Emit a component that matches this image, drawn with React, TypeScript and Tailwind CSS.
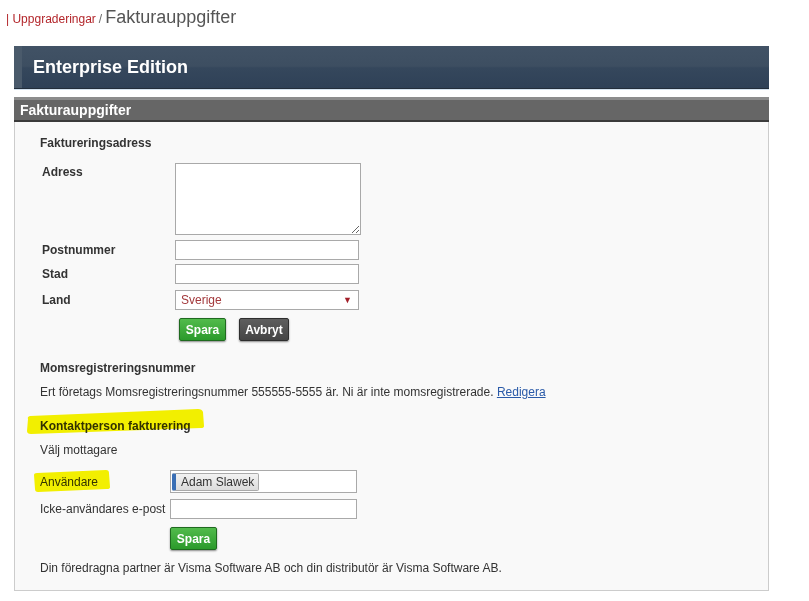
import React from "react";

const Label = ({ children, bold = true }: { children: React.ReactNode; bold?: boolean }) => (
  <div className={bold ? "font-bold pl-[2px]" : ""}>{children}</div>
);

const TextInput = ({ w = "w-[184px]" }: { w?: string }) => (
  <input
    readOnly
    className={`${w} h-[20px] border border-[#a9a9a9] bg-white px-1 text-[12px] outline-none`}
  />
);

const GreenButton = ({ children }: { children: React.ReactNode }) => (
  <button className="h-[23px] w-[47px] rounded-[2px] border border-[#1f6a1f] bg-[linear-gradient(to_bottom,#52bb4c,#2b9a2b)] text-[12px] font-bold text-white shadow-[0_1px_2px_rgba(0,0,0,0.45)]">
    {children}
  </button>
);

const App = () => {
  return (
    <div className="relative h-[601px] w-[809px] bg-white font-['Liberation_Sans',Arial,sans-serif] text-[12px] leading-[16px] text-[#333]">
      {/* breadcrumb */}
      <div className="flex h-[46px] items-baseline pl-[6px] pt-[6px]">
        <span className="text-[12px] text-[#b3262b]">| Uppgraderingar</span>
        <span className="ml-[3px] text-[12px] text-[#666]">/</span>
        <span className="ml-[3px] text-[18px] leading-[22px] text-[#555]">Fakturauppgifter</span>
      </div>

      <div className="ml-[14px] w-[755px]">
        {/* edition bar */}
        <div className="flex h-[42px] items-center border-l-[8px] border-l-[#4a5a6b] bg-[linear-gradient(to_bottom,#415265_0%,#3d4e61_48%,#35475c_52%,#2f4157_100%)] pl-[11px]">
          <span className="text-[18px] font-bold text-white">Enterprise Edition</span>
        </div>
        <div className="h-[1px] bg-[#232e3b]" />
        <div className="h-[1px] bg-[#d3e2ef]" />

        {/* section header */}
        <div className="mt-[7px] h-[25px] border-t-[3px] border-b-[2px] border-t-[#8c8c8c] border-b-[#3b3b3b] bg-[#666] pl-[6px]">
          <span className="block text-[14px] font-bold leading-[20px] text-white">Fakturauppgifter</span>
        </div>

        {/* panel */}
        <div className="border-x border-b border-[#cccccc] bg-[#f9f9f9] pl-[25px] pt-[13px] pb-[14px]">
          <div className="font-bold">Faktureringsadress</div>

          <div className="mt-[12px] grid grid-cols-[135px_auto] items-center">
            <div className="self-start pt-[1px]">
              <Label>Adress</Label>
            </div>
            <textarea
              readOnly
              className="block h-[72px] w-[186px] border border-[#a9a9a9] bg-white outline-none"
            />

            <div className="mt-[5px]">
              <Label>Postnummer</Label>
            </div>
            <div className="mt-[5px]">
              <TextInput />
            </div>

            <div className="mt-[4px]">
              <Label>Stad</Label>
            </div>
            <div className="mt-[4px]">
              <TextInput />
            </div>

            <div className="mt-[6px]">
              <Label>Land</Label>
            </div>
            <div className="mt-[6px] flex h-[20px] w-[184px] items-center justify-between border border-[#a9a9a9] bg-white pl-[5px] pr-[6px] text-[#a3393c]">
              <span>Sverige</span>
              <span className="text-[9px] text-[#a3202a]">▼</span>
            </div>

            <div />
            <div className="mt-[8px] flex gap-[13px] pl-[4px]">
              <GreenButton>Spara</GreenButton>
              <button className="h-[23px] w-[50px] rounded-[2px] border border-[#2e2e2e] bg-[linear-gradient(to_bottom,#5e5e5e,#454545)] text-[12px] font-bold text-white shadow-[0_1px_2px_rgba(0,0,0,0.45)]">
                Avbryt
              </button>
            </div>
          </div>

          <div className="mt-[19px] font-bold">Momsregistreringsnummer</div>
          <div className="mt-[8px]">
            Ert företags Momsregistreringsnummer 555555-5555 är. Ni är inte momsregistrerade.{" "}
            <a className="text-[#2a5aa8] underline">Redigera</a>
          </div>

          <div className="mt-[18px] font-bold">Kontaktperson fakturering</div>
          <div className="mt-[8px]">Välj mottagare</div>

          <div className="mt-[12px] grid grid-cols-[130px_auto] items-center">
            <div>Användare</div>
            <div className="flex h-[23px] w-[187px] items-center border border-[#a9a9a9] bg-white pl-[1px]">
              <span className="flex h-[18px] items-center rounded-[2px] border border-[#aaaaaa] border-l-[4px] border-l-[#3a6fb5] bg-[linear-gradient(to_bottom,#f2f2f2,#dcdcdc)] pl-[5px] pr-[4px] text-[#333]">
                Adam Slawek
              </span>
            </div>

            <div className="mt-[6px]">Icke-användares e-post</div>
            <div className="mt-[6px]">
              <TextInput w="w-[187px]" />
            </div>

            <div />
            <div className="mt-[8px]">
              <GreenButton>Spara</GreenButton>
            </div>
          </div>

          <div className="mt-[10px]">
            Din föredragna partner är Visma Software AB och din distributör är Visma Software AB.
          </div>
        </div>
      </div>

      {/* marker highlights drawn over the page */}
      <svg
        className="pointer-events-none absolute left-0 top-0 mix-blend-multiply"
        width="809"
        height="601"
        viewBox="0 0 809 601"
      >
        <path
          d="M28 419 Q27 417 30 416 L198 409 Q202 409 203 412 L204 426 Q204 428 201 428 L31 434 Q27 434 27 431 Z"
          fill="#f8f500"
        />
        <path
          d="M34 475 Q34 473 37 473 L106 470 Q109 470 109 473 L110 487 Q110 489 107 489 L38 492 Q35 492 35 489 Z"
          fill="#f8f500"
        />
      </svg>
    </div>
  );
};

export default App;
